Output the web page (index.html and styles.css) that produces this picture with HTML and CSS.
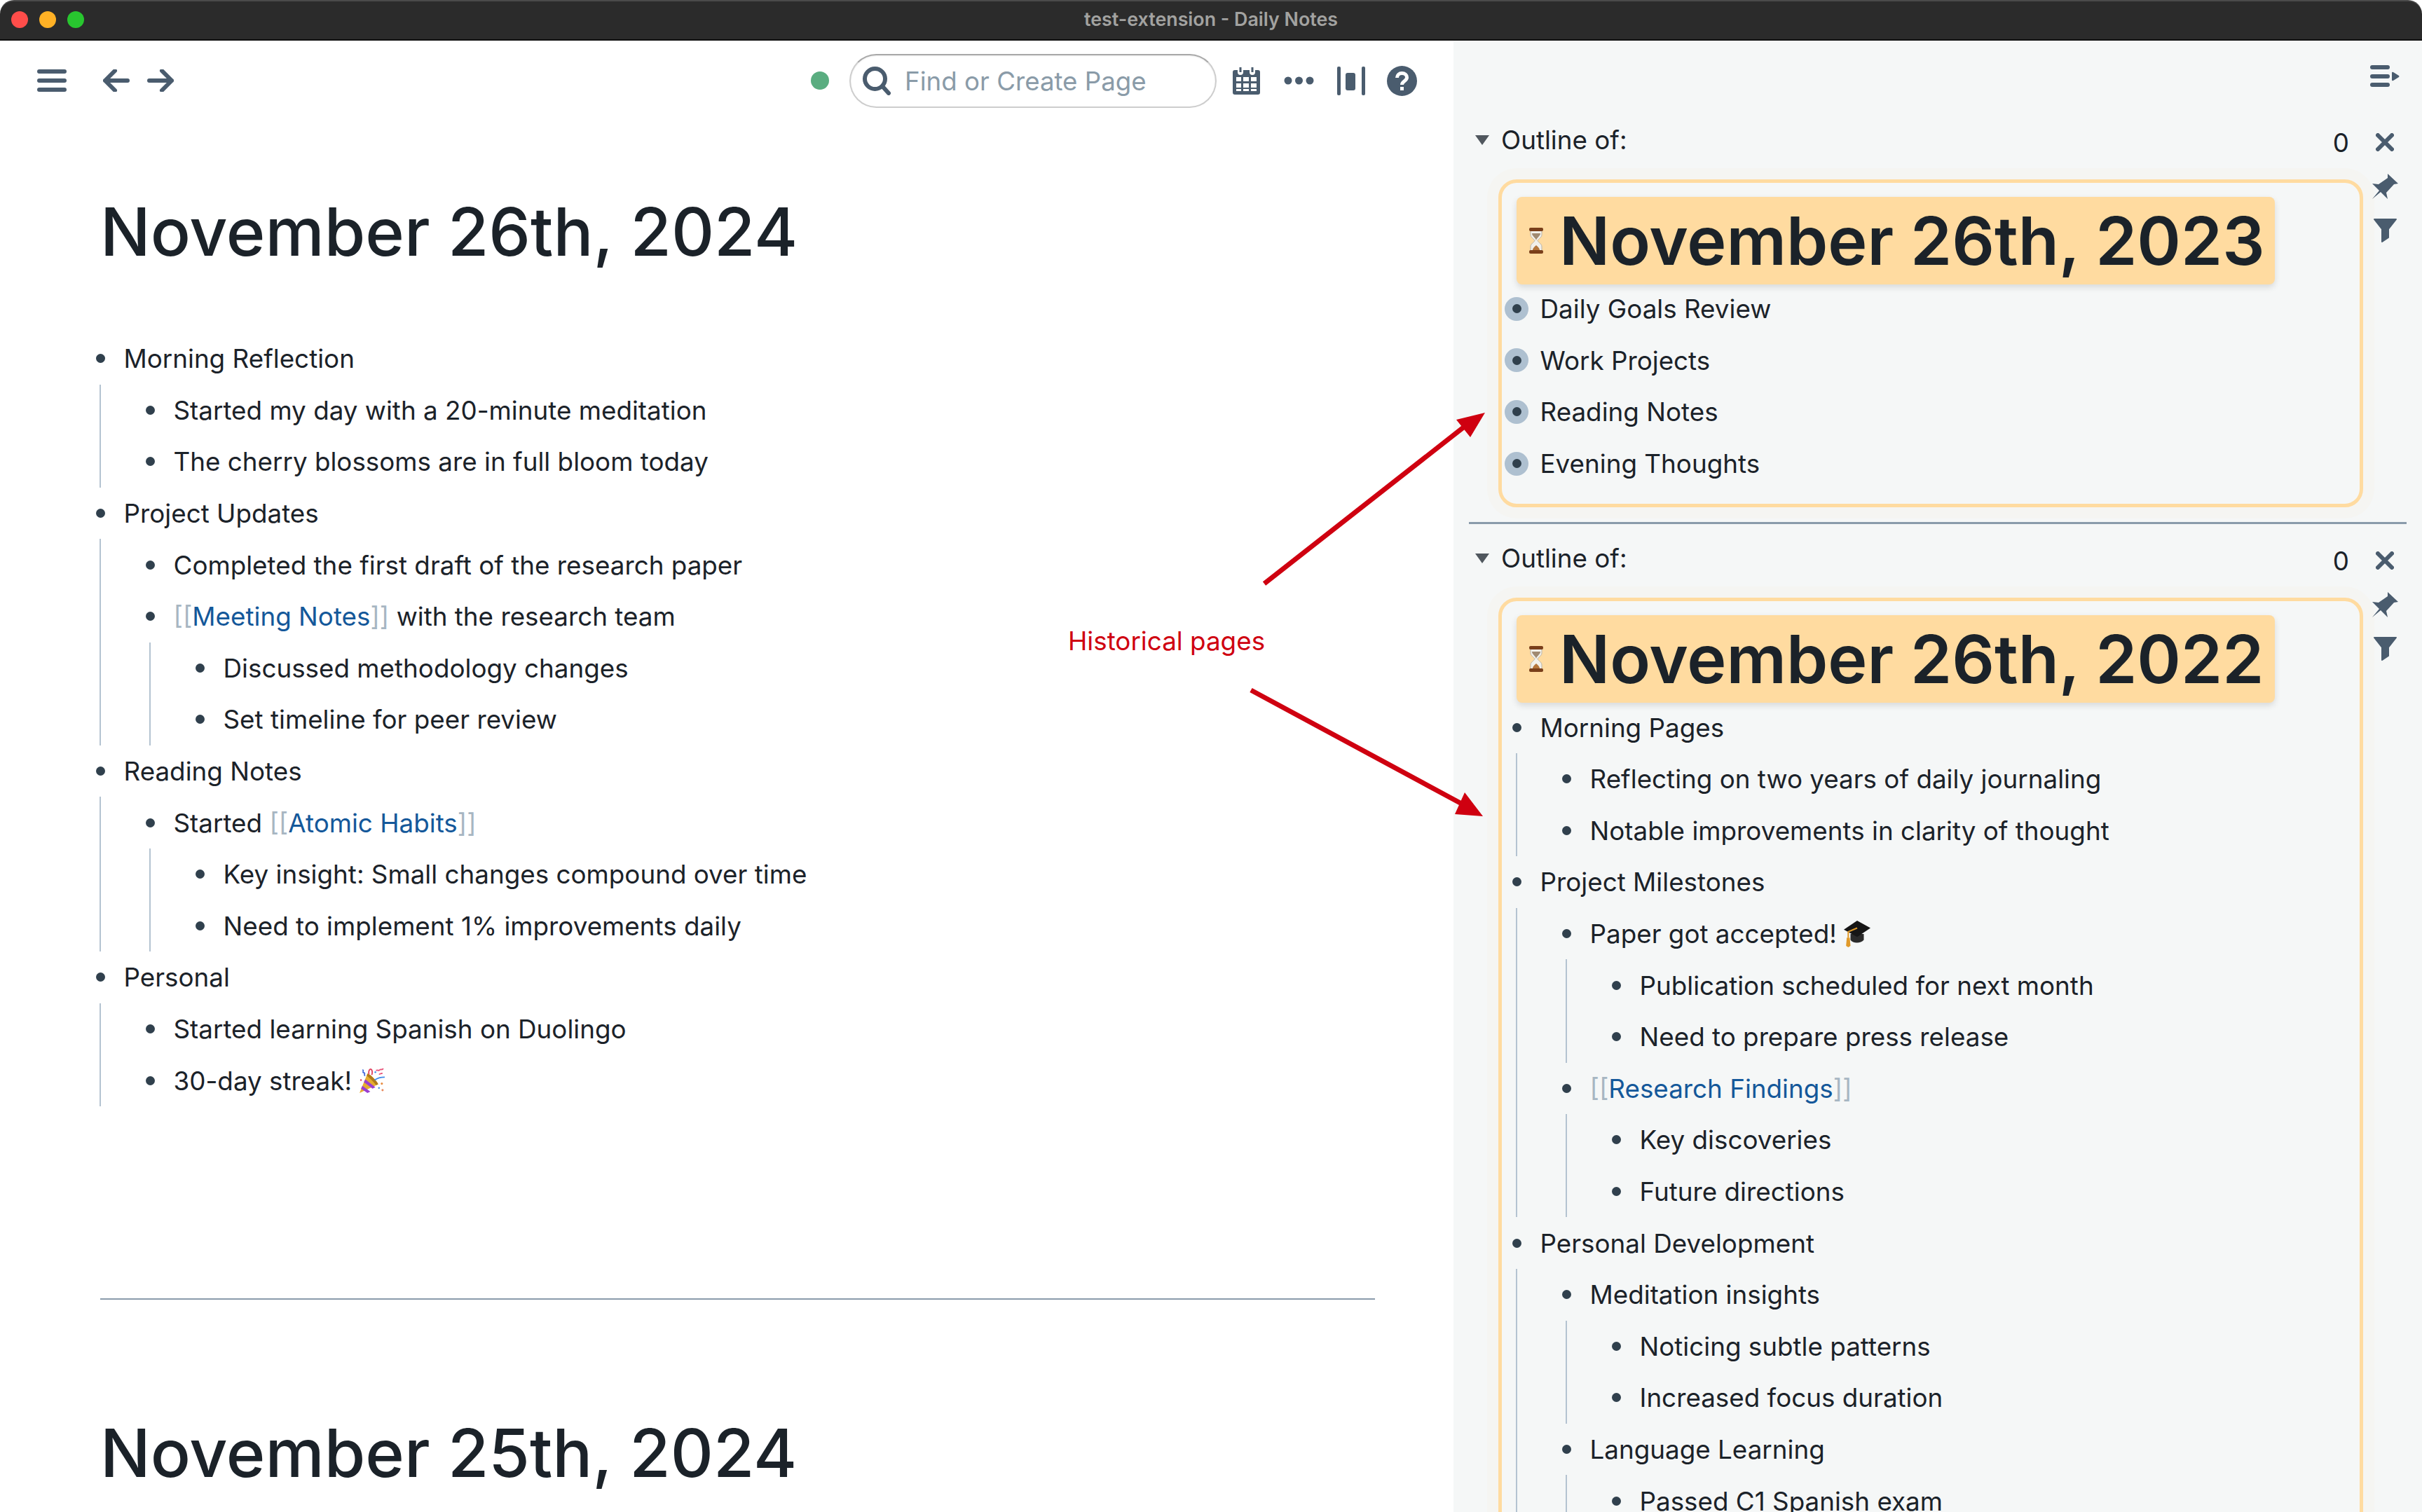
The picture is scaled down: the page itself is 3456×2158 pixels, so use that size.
FILE: index.html
```html
<!DOCTYPE html>
<html lang="en">
<head>
<meta charset="utf-8">
<title>test-extension - Daily Notes</title>
<link rel="stylesheet" href="styles.css">
</head>
<body>
<svg class="defs" aria-hidden="true">
  <symbol id="hourglass" viewBox="0 0 24 37">
    <path d="M4 4h16v6c0 4-5 6-6 8.500 1 2.500 6 4.500 6 8.500v6H4v-6c0-4 5-6 6-8.500C9 16 4 14 4 10z" fill="#f2f0ea" stroke="#b9b3a8"/>
    <path d="M6 8h12c0 4-5 6-6 10-1-4-6-6-6-10z" fill="#a08a72"/>
    <path d="M7 32c0-3 3-5 5-7 2 2 5 4 5 7z" fill="#b5763c"/>
    <rect x="2" y="0" width="20" height="5" rx="2" fill="#7a3f1a"/>
    <rect x="2" y="32" width="20" height="5" rx="2" fill="#7a3f1a"/>
  </symbol>
  <symbol id="popper" viewBox="0 0 37 37">
    <path d="M1 35 12 8c4 1 13 10 15 15z" fill="#e6ad2f"/>
    <path d="M5 25l11 8-4 2-9-6zM9 16l14 11-4 2-12-9z" fill="#9a3fd0"/>
    <path d="M12 8c4 1 13 10 15 15l-3 1C20 19 15 14 11 11z" fill="#b07a1a"/>
    <path d="M5 3c3 0-1 4 2 4s-1 4 2 4" fill="none" stroke="#3d64d8" stroke-width="1.600"/>
    <path d="M14 9c-1-4 1-8 3-7s2 5 1 8" fill="none" stroke="#e0405e" stroke-width="1.800"/>
    <path d="M24 4c2-2 3 1 5-1s3 1 5-2M28 9c2 0 3-2 5-1" fill="none" stroke="#e8547a" stroke-width="1.800"/>
    <path d="M22 17c4-3 9-4 14-4" fill="none" stroke="#3f8be8" stroke-width="1.800"/>
    <circle cx="32" cy="22" r="1.500" fill="#e88b3f"/><circle cx="33" cy="31" r="1.500" fill="#e88b5f"/><circle cx="28" cy="28" r="1.200" fill="#3f8be8"/><circle cx="23" cy="6" r="1.200" fill="#3f8be8"/><circle cx="3" cy="17" r="1.200" fill="#e0405e"/>
  </symbol>
  <symbol id="cap" viewBox="0 0 36 36">
    <path d="M9 18v8c3 5 14 5 18 0v-8z" fill="#2a2a2a"/>
    <path d="M18 0 36 10 18 22 0 12z" fill="#161616"/>
    <path d="M18 10 6 15v8" fill="none" stroke="#e09a2a" stroke-width="2"/>
    <path d="M4 23h4l1 11-3 2-3-2z" fill="#e09a2a"/>
  </symbol>
</svg>

<header class="titlebar">
  <div class="lights"><i class="light red"></i><i class="light amber"></i><i class="light green"></i></div>
  <span class="wintitle">test-extension - Daily Notes</span>
</header>

<div class="app">
  <main class="main">
    <div class="topbar">
      <svg class="ic ic-menu" viewBox="0 0 42 32"><path d="M3 3h36M3 16h36M3 29h36"/></svg>
      <svg class="ic ic-arrow" viewBox="0 0 38 32"><path d="M3 16h32M17 2 3 16l14 14" /></svg>
      <svg class="ic ic-arrow" viewBox="0 0 38 32"><path d="M3 16h32M21 2l14 14-14 14"/></svg>
      <span class="spring"></span>
      <i class="status"></i>
      <div class="search">
        <svg class="ic-search" viewBox="0 0 41 41"><circle cx="17.500" cy="17.500" r="14.500"/><path d="M28 28l9 10"/></svg>
        <span class="placeholder">Find or Create Page</span>
      </div>
      <svg class="solid cal" viewBox="0 0 39 39"><path fill-rule="evenodd" d="M3 4h4v3a4 4 0 0 0 8 0V4h9v3a4 4 0 0 0 8 0V4h4a3 3 0 0 1 3 3v29a3 3 0 0 1-3 3H3a3 3 0 0 1-3-3V7a3 3 0 0 1 3-3zM5 14v6h7v-6zm10 0v6h8v-6zm11 0v6h8v-6zM5 23v6h7v-6zm10 0v6h8v-6zm11 0v6h8v-6zM5 31v3h7v-3zm10 0v3h8v-3zm11 0v3h8v-3z"/><path d="M9.500 0h3v7h-3zM26.500 0h3v7h-3z"/></svg>
      <svg class="solid dots" viewBox="0 0 43 12"><circle cx="6" cy="6" r="5.500"/><circle cx="21.500" cy="6" r="5.500"/><circle cx="37" cy="6" r="5.500"/></svg>
      <svg class="solid stats" viewBox="0 0 40 41"><rect x="0" y="0" width="5" height="41" rx="2"/><rect x="35" y="0" width="5" height="41" rx="2"/><rect x="12" y="9" width="14" height="25" rx="3"/></svg>
      <svg class="help" viewBox="0 0 43 43"><circle cx="21.500" cy="21.500" r="21.500" fill="#4a5c6e"/><path d="M14.500 17c0-4 3-6.500 7-6.500s7 2.500 7 6c0 5.500-7 5-7 10.500" fill="none" stroke="#fff" stroke-width="5"/><rect x="19" y="30" width="5" height="5" fill="#fff"/></svg>
    </div>

    <article class="log">
      <h1 class="page-title">November 26th, 2024</h1>
      <div class="outline">
        <div class="row"><i class="dot"></i><span>Morning Reflection</span></div>
        <div class="kids">
          <div class="row"><i class="dot"></i><span>Started my day with a 20-minute meditation</span></div>
          <div class="row"><i class="dot"></i><span>The cherry blossoms are in full bloom today</span></div>
        </div>
        <div class="row"><i class="dot"></i><span>Project Updates</span></div>
        <div class="kids">
          <div class="row"><i class="dot"></i><span>Completed the first draft of the research paper</span></div>
          <div class="row"><i class="dot"></i><span><b class="br">[[</b><a class="ref">Meeting Notes</a><b class="br">]]</b> with the research team</span></div>
          <div class="kids">
            <div class="row"><i class="dot"></i><span>Discussed methodology changes</span></div>
            <div class="row"><i class="dot"></i><span>Set timeline for peer review</span></div>
          </div>
        </div>
        <div class="row"><i class="dot"></i><span>Reading Notes</span></div>
        <div class="kids">
          <div class="row"><i class="dot"></i><span>Started <b class="br">[[</b><a class="ref">Atomic Habits</a><b class="br">]]</b></span></div>
          <div class="kids">
            <div class="row"><i class="dot"></i><span>Key insight: Small changes compound over time</span></div>
            <div class="row"><i class="dot"></i><span>Need to implement 1% improvements daily</span></div>
          </div>
        </div>
        <div class="row"><i class="dot"></i><span>Personal</span></div>
        <div class="kids">
          <div class="row"><i class="dot"></i><span>Started learning Spanish on Duolingo</span></div>
          <div class="row"><i class="dot"></i><span>30-day streak! <svg class="emoji"><use href="#popper"/></svg></span></div>
        </div>
      </div>
      <hr class="page-sep">
      <h1 class="page-title">November 25th, 2024</h1>
    </article>
  </main>

  <aside class="side">
    <div class="side-top">
      <svg class="solid collapse" viewBox="0 0 42 31"><rect x="0" y="0" width="28" height="6" rx="3"/><rect x="0" y="13" width="28" height="6" rx="3"/><rect x="0" y="25" width="28" height="6" rx="3"/><path d="M31 11q0-2 2-1l8 5q1 1 0 2l-8 5q-2 1-2-1z"/></svg>
    </div>

    <section class="panel">
      <div class="panel-head">
        <i class="caret"></i><span class="panel-label">Outline of:</span>
        <span class="spring"></span>
        <span class="count">0</span>
        <svg class="ic ic-close" viewBox="0 0 26 26"><path d="M3 3l20 20M23 3 3 23"/></svg>
      </div>
      <div class="panel-body">
        <div class="card">
          <h2 class="card-title"><svg class="glass"><use href="#hourglass"/></svg><span>November 26th, 2023</span></h2>
          <div class="outline">
            <div class="row"><i class="dot closed"></i><span>Daily Goals Review</span></div>
            <div class="row"><i class="dot closed"></i><span>Work Projects</span></div>
            <div class="row"><i class="dot closed"></i><span>Reading Notes</span></div>
            <div class="row"><i class="dot closed"></i><span>Evening Thoughts</span></div>
          </div>
        </div>
        <div class="tools">
          <svg class="solid pin" viewBox="0 0 37 36"><path d="M22 0 37 14l-6 1-11 12 2 9-10-10L0 36l10-12L0 14l9 1L22 6z"/></svg>
          <svg class="solid funnel" viewBox="0 0 33 34"><path d="M1 1h31L21 15v12l-9 6V15z" stroke="#4a5c6e" stroke-width="2" stroke-linejoin="round"/></svg>
        </div>
      </div>
    </section>

    <section class="panel ruled">
      <div class="panel-head">
        <i class="caret"></i><span class="panel-label">Outline of:</span>
        <span class="spring"></span>
        <span class="count">0</span>
        <svg class="ic ic-close" viewBox="0 0 26 26"><path d="M3 3l20 20M23 3 3 23"/></svg>
      </div>
      <div class="panel-body">
        <div class="card">
          <h2 class="card-title"><svg class="glass"><use href="#hourglass"/></svg><span>November 26th, 2022</span></h2>
          <div class="outline">
            <div class="row"><i class="dot"></i><span>Morning Pages</span></div>
            <div class="kids">
              <div class="row"><i class="dot"></i><span>Reflecting on two years of daily journaling</span></div>
              <div class="row"><i class="dot"></i><span>Notable improvements in clarity of thought</span></div>
            </div>
            <div class="row"><i class="dot"></i><span>Project Milestones</span></div>
            <div class="kids">
              <div class="row"><i class="dot"></i><span>Paper got accepted! <svg class="emoji"><use href="#cap"/></svg></span></div>
              <div class="kids">
                <div class="row"><i class="dot"></i><span>Publication scheduled for next month</span></div>
                <div class="row"><i class="dot"></i><span>Need to prepare press release</span></div>
              </div>
              <div class="row"><i class="dot"></i><span><b class="br">[[</b><a class="ref">Research Findings</a><b class="br">]]</b></span></div>
              <div class="kids">
                <div class="row"><i class="dot"></i><span>Key discoveries</span></div>
                <div class="row"><i class="dot"></i><span>Future directions</span></div>
              </div>
            </div>
            <div class="row"><i class="dot"></i><span>Personal Development</span></div>
            <div class="kids">
              <div class="row"><i class="dot"></i><span>Meditation insights</span></div>
              <div class="kids">
                <div class="row"><i class="dot"></i><span>Noticing subtle patterns</span></div>
                <div class="row"><i class="dot"></i><span>Increased focus duration</span></div>
              </div>
              <div class="row"><i class="dot"></i><span>Language Learning</span></div>
              <div class="kids">
                <div class="row"><i class="dot"></i><span>Passed C1 Spanish exam</span></div>
              </div>
            </div>
          </div>
        </div>
        <div class="tools">
          <svg class="solid pin" viewBox="0 0 37 36"><path d="M22 0 37 14l-6 1-11 12 2 9-10-10L0 36l10-12L0 14l9 1L22 6z"/></svg>
          <svg class="solid funnel" viewBox="0 0 33 34"><path d="M1 1h31L21 15v12l-9 6V15z" stroke="#4a5c6e" stroke-width="2" stroke-linejoin="round"/></svg>
        </div>
      </div>
    </section>
  </aside>
</div>

<div class="note">Historical pages</div>
<svg class="note-arrows" viewBox="0 0 3456 2158" aria-hidden="true">
  <path d="M1804 833 2092 607M1785 985 2091 1150"/>
  <path class="head" d="M2119 589 2098 624 2078 599zM2116 1165 2076 1162 2090 1131z"/>
</svg>
</body>
</html>
```
FILE: styles.css
```css
* { box-sizing: border-box; }
html, body { margin: 0; height: 2158px; overflow: hidden; background: #fff; }
body {
  width: 3456px;
  font-family: Inter, "Liberation Sans", sans-serif;
  font-size: 36.8px;
  color: #1b2229;
  display: flex;
  flex-direction: column;
  position: relative;
}
.defs { position: absolute; width: 0; height: 0; }

/* window chrome */
.titlebar {
  height: 58px;
  flex: none;
  background: #2b2b2b;
  border-top: 2px solid #4a4a4a;
  border-bottom: 2px solid #111;
  border-radius: 20px 20px 0 0;
  display: flex;
  align-items: center;
  justify-content: center;
  position: relative;
}
.lights { position: absolute; left: 16px; top: 14px; display: flex; gap: 16px; }
.light { width: 24px; height: 24px; border-radius: 50%; }
.red { background: #ff4d4a; }
.amber { background: #ffb125; }
.green { background: #28c62f; }
.wintitle { color: #a2a2a0; font-size: 26.8px; font-weight: 600; position: relative; top: -2px; }

.app { flex: 1; display: flex; min-height: 0; }
.spring { flex: 1; }

/* main column */
.main { width: 2074px; flex: none; overflow: hidden; }
.topbar { height: 114px; display: flex; align-items: center; padding: 0 52px 0 53px; }
.ic { fill: none; stroke: #4a5c6e; stroke-width: 6; stroke-linecap: round; stroke-linejoin: round; }
.ic-menu { width: 42px; height: 32px; margin-right: 52px; }
.ic-arrow { width: 38px; height: 32px; margin-right: 25px; }
.solid { fill: #4a5c6e; flex: none; }
.status { width: 26px; height: 26px; border-radius: 50%; background: #5aad80; margin-right: 29px; }
.search {
  width: 524px;
  height: 77px;
  border-radius: 39px;
  border: 2px solid #cdcdcd;
  border-top-color: #a8a8a8;
  box-shadow: inset 0 1px 2px rgba(0,0,0,.08);
  display: flex;
  align-items: center;
  padding-left: 17px;
  margin-right: 23px;
}
.ic-search { width: 41px; height: 41px; fill: none; stroke: #4a5c6e; stroke-width: 6; stroke-linecap: round; flex: none; margin-right: 19px; }
.placeholder { color: #8a9ba8; font-size: 36.7px; }
.cal { width: 39px; height: 39px; margin-right: 34px; }
.dots { width: 43px; height: 12px; margin-right: 33px; }
.stats { width: 40px; height: 41px; margin-right: 31px; }
.help { width: 43px; height: 43px; flex: none; }

.log { padding: 0 112px 0 143px; }
.page-title { font-size: 94.8px; font-weight: 500; line-height: 112px; margin: 103px 0 88px; letter-spacing: 0; }
.log .outline { margin-left: -17px; }
.page-sep { border: 0; height: 2px; background: #8a9bab; margin: 274px 0 0; }
.log .page-sep + .page-title { margin-top: 163px; }

/* outline */
.row { height: 73.6px; display: flex; align-items: center; white-space: nowrap; }
.dot { width: 34px; flex: none; margin-right: 16.500px; display: flex; justify-content: center; align-items: center; height: 34px; border-radius: 50%; position: relative; }
.dot::after { content: ""; width: 13px; height: 13px; border-radius: 50%; background: #30404d; }
.dot.closed { background: #aec0d0; }
.kids { margin-left: 16px; border-left: 2px solid #b4c3d1; padding-left: 53px; }
.ref { color: #14589a; }
.br { color: #a7b6c2; font-weight: 400; }
.emoji { width: 38px; height: 38px; vertical-align: -6px; }

/* sidebar */
.side { flex: 1; background: #f5f7f7; overflow: hidden; min-width: 0; }
.side-top { height: 82px; display: flex; justify-content: flex-end; padding: 35px 32px 0 0; }
.collapse { width: 42px; height: 31px; }
.panel { padding: 32px 0 21px; }
.panel.ruled { position: relative; margin: 0 22px; padding: 21px 0 0; border-top: 3px solid #8a9bab; }
.panel.ruled .panel-head { margin: 0 -22px; }
.panel.ruled .panel-body { margin: 28px -22px 0; }
.panel-head { height: 56px; display: flex; align-items: center; padding: 0 40px 0 31px; }
.caret { width: 0; height: 0; border: 10.500px solid transparent; border-top: 14px solid #50575e; border-bottom: 0; margin-right: 17px; }
.panel-label { line-height: 56px; }
.count { margin-right: 38px; position: relative; top: 3px; }
.ic-close { width: 26px; height: 26px; position: relative; top: 3px; }
.panel-body { margin-top: 28px; display: flex; align-items: flex-start; padding-left: 64px; }
.card {
  width: 1234px;
  flex: none;
  border: 5px solid #ffdba0;
  border-radius: 26px;
  padding: 20px 0 21px 4px;
  box-shadow: 0 0 0 16px rgba(255,225,170,.06);
}
.card-title {
  display: flex;
  align-items: center;
  width: 1082px;
  height: 125px;
  margin: 0 0 -2px 17px;
  padding-left: 16px;
  background: #ffdba0;
  border-radius: 8px;
  box-shadow: 0 4px 10px rgba(0,0,0,.12);
  font-size: 95px;
  font-weight: 600;
  white-space: nowrap;
}
.glass { width: 24px; height: 37px; margin: 0 21px 0 0; flex: none; }
.tools { width: 62px; display: flex; flex-direction: column; align-items: center; gap: 28px; margin: -8px 0 0 0; }
.pin { width: 37px; height: 36px; }
.funnel { width: 33px; height: 34px; }

/* annotation */
.note { position: absolute; left: 1524px; top: 892px; color: #cf0010; font-size: 36.8px; line-height: 46px; }
.note-arrows { position: absolute; left: 0; top: 0; width: 3456px; height: 2158px; pointer-events: none; fill: none; stroke: #cf0010; stroke-width: 7; }
.note-arrows .head { fill: #cf0010; stroke: none; }
```
